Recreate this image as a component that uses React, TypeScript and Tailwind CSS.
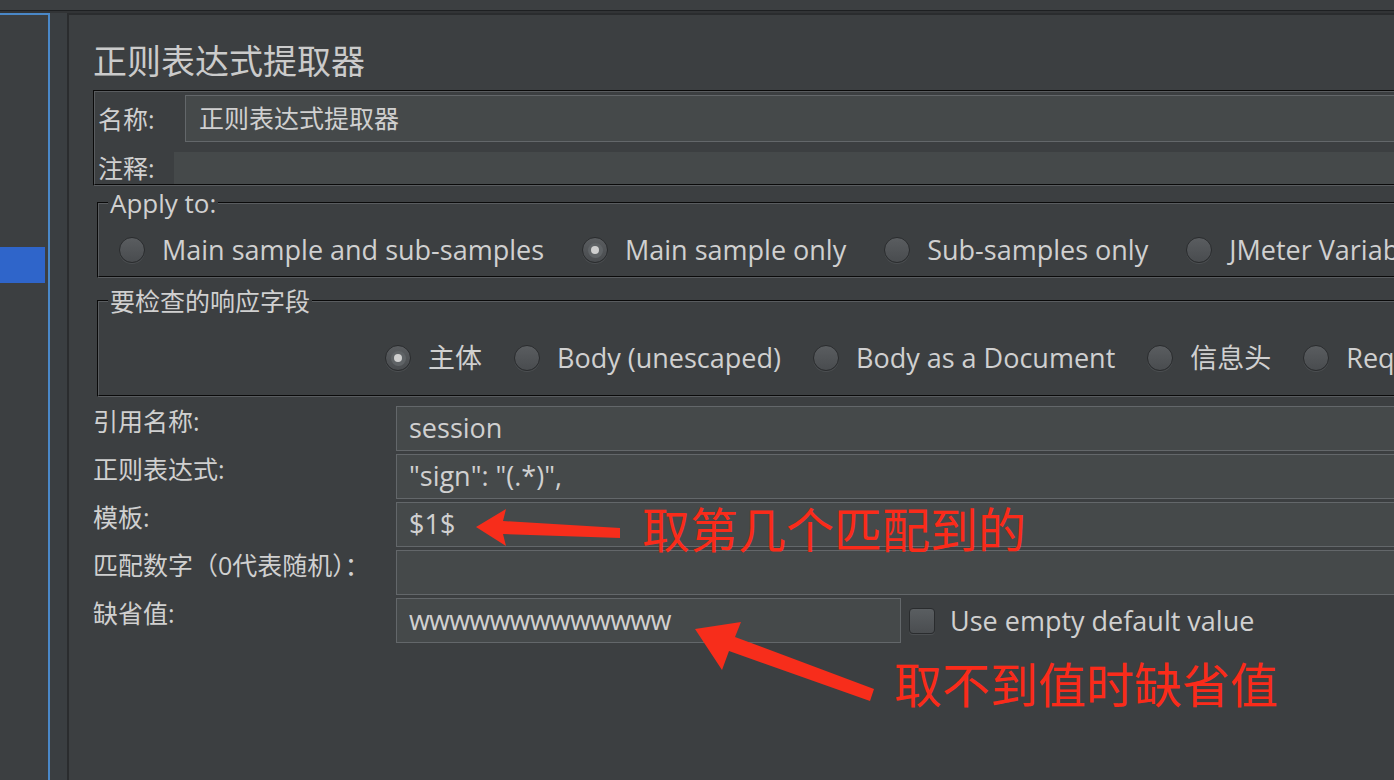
import React from "react"

const radioText = "text-[27px] leading-[30px] whitespace-nowrap"

function Radio({ checked }: { checked?: boolean }) {
  return (
    <span className="flex h-[26px] w-[26px] shrink-0 items-center justify-center rounded-full border border-[#2a2c2e] bg-[linear-gradient(#5a5d60,#494c4f)] shadow-[0_1px_0_#4b4e51]">
      {checked && (
        <span className="flex h-[15px] w-[15px] items-center justify-center rounded-full bg-[#5f6366]">
          <span className="h-[8px] w-[8px] rounded-full bg-[#cfcfcf]" />
        </span>
      )}
    </span>
  )
}

function RadioItem({ label, checked }: { label: string; checked?: boolean }) {
  return (
    <div className="flex items-center gap-[17px]">
      <Radio checked={checked} />
      <span className={radioText}>{label}</span>
    </div>
  )
}

const fields = [
  { label: "引用名称:", value: "session" },
  { label: "正则表达式:", value: "\"sign\": \"(.*)\"," },
  { label: "模板:", value: "$1$" },
  { label: "匹配数字（0代表随机）：", value: "" },
]

export default function App() {
  return (
    <div className="relative h-[780px] w-[1394px] overflow-hidden bg-[#3c3f41] font-['Open_Sans','Noto_Sans_CJK_SC',sans-serif] text-[#d0d0d0]">
      {/* window top strip */}
      <div className="h-[10px] bg-[#3c3f41]" />
      <div className="h-[3px] border-t border-[#1e2022] bg-[#323436]" />

      <div className="flex h-[767px]">
        {/* tree panel */}
        <div className="w-[50px] border-t-2 border-r-2 border-[#4a88c8] pr-[3px]">
          <div className="mt-[232px] h-[36px] bg-[#2f65ca]" />
        </div>
        <div className="w-[17px] bg-[#3a3e41]" />

        {/* main panel */}
        <div className="flex-1 overflow-hidden border-t-2 border-l-2 border-[#2a2c2e] pl-[24px]">
          <div className="w-[1345px]">
            <div className="mt-[29px] text-[34px] leading-[34px] text-[#cbcbcb]">正则表达式提取器</div>

            {/* name / comment */}
            <div className="mt-[12px] border-2 border-[#595c5f] [border-style:groove]">
              <div className="mt-[3px] flex h-[47px] items-center">
                <div className="w-[90px] pl-[3px] text-[25px] leading-[30px]">名称:</div>
                <div className="flex h-full flex-1 items-center border border-[#63676a] bg-[#45494a] pl-[13px] text-[25px]">
                  正则表达式提取器
                </div>
              </div>
              <div className="mt-[10px] flex h-[32px] items-center">
                <div className="w-[79px] pl-[3px] text-[25px] leading-[30px]">注释:</div>
                <div className="h-full flex-1 bg-[#45494a]" />
              </div>
            </div>

            {/* apply to */}
            <fieldset className="mt-[4px] ml-[4px] border-2 border-[#595c5f] pt-[19px] pb-[11px] [border-style:groove]">
              <legend className="ml-[9px] px-[2px] text-[26px] leading-[26px]">Apply to:</legend>
              <div className="flex items-center gap-[38px] pl-[20px]">
                <RadioItem label="Main sample and sub-samples" />
                <RadioItem label="Main sample only" checked />
                <RadioItem label="Sub-samples only" />
                <RadioItem label="JMeter Variable Name to use" />
              </div>
            </fieldset>

            {/* response field */}
            <fieldset className="mt-[10px] ml-[4px] border-2 border-[#595c5f] pt-[29px] pb-[22px] [border-style:groove]">
              <legend className="ml-[9px] px-[2px] text-[25px] leading-[26px]">要检查的响应字段</legend>
              <div className="flex items-center gap-[32px] pl-[286px]">
                <RadioItem label="主体" checked />
                <RadioItem label="Body (unescaped)" />
                <RadioItem label="Body as a Document" />
                <RadioItem label="信息头" />
                <RadioItem label="Request Headers" />
              </div>
            </fieldset>

            {/* extractor fields */}
            <div className="mt-[9px] flex flex-col">
              {fields.map((f) => (
                <div key={f.label} className="flex h-[48px] items-start">
                  <div className="w-[303px] text-[25px] leading-[30px]">{f.label}</div>
                  <div className="flex h-[45px] flex-1 items-center border border-[#63676a] bg-[#45494a] pl-[12px] text-[27px]">
                    {f.value}
                  </div>
                </div>
              ))}
              <div className="flex h-[48px] items-start">
                <div className="w-[303px] text-[25px] leading-[30px]">缺省值:</div>
                <div className="flex h-[45px] w-[505px] items-center border border-[#63676a] bg-[#45494a] pl-[12px] text-[27px] tracking-[-0.8px]">
                  wwwwwwwwwwwww
                </div>
                <div className="ml-[8px] flex h-[45px] items-center gap-[15px]">
                  <span className="h-[26px] w-[26px] rounded-[4px] border border-[#2a2c2e] bg-[linear-gradient(#5a5e61,#4a4d50)] shadow-[0_1px_0_#4b4e51]" />
                  <span className={radioText}>Use empty default value</span>
                </div>
              </div>
            </div>
          </div>
        </div>
      </div>

      {/* red annotations */}
      <svg className="pointer-events-none absolute inset-0" width="1394" height="780" viewBox="0 0 1394 780">
        <polygon points="476,527 506,509 503,521 620,528 620,538 503,534 506,546" fill="#f72d1b" />
        <polygon points="695,629 741,622 735,637 874,689 870,701 729,651 722,670" fill="#f72d1b" />
      </svg>
      <div className="absolute left-[642px] top-[503px] font-['Noto_Sans_CJK_SC',sans-serif] text-[48px] leading-[48px] text-[#fa2b1a]">
        取第几个匹配到的
      </div>
      <div className="absolute left-[894px] top-[658px] font-['Noto_Sans_CJK_SC',sans-serif] text-[48px] leading-[48px] text-[#fa2b1a]">
        取不到值时缺省值
      </div>
    </div>
  )
}
